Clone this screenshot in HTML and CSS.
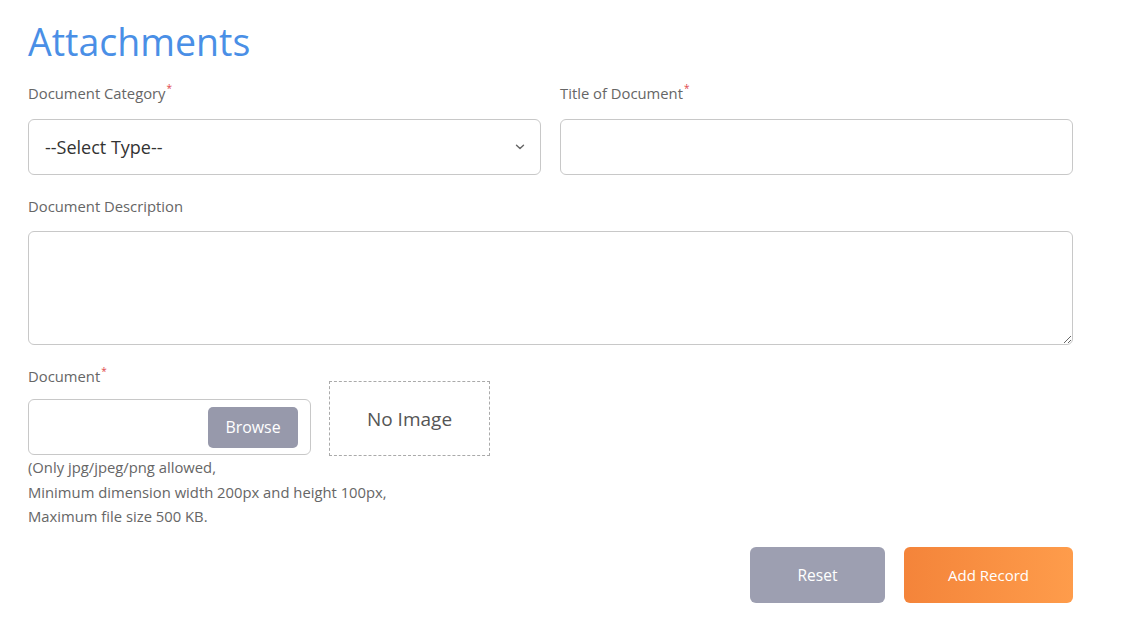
FILE: index.html
```html
<!DOCTYPE html>
<html>
<head>
<meta charset="utf-8">
<link rel="stylesheet" href="styles.css">
</head>
<body>
<div class="page">
  <h1 class="title">Attachments</h1>
  <div class="row two">
    <div class="field">
      <label class="label">Document Category<span class="req">*</span></label>
      <div class="select">
        <span class="select-text">--Select Type--</span>
        <svg class="chev" width="10" height="6" viewBox="0 0 10 6"><path d="M1.5 1.2 L5 4.6 L8.5 1.2" fill="none" stroke="#666" stroke-width="1.4" stroke-linecap="round" stroke-linejoin="round"/></svg>
      </div>
    </div>
    <div class="field">
      <label class="label">Title of Document<span class="req">*</span></label>
      <div class="input"></div>
    </div>
  </div>
  <div class="field desc">
    <label class="label">Document Description</label>
    <textarea class="textarea"></textarea>
  </div>
  <div class="doc-grid">
    <label class="label doc-label">Document<span class="req">*</span></label>
    <div class="file">
      <span class="browse">Browse</span>
    </div>
    <div class="noimage">No Image</div>
    <div class="help">
      <div>(Only jpg/jpeg/png allowed,</div>
      <div>Minimum dimension width 200px and height 100px,</div>
      <div>Maximum file size 500 KB.</div>
    </div>
  </div>
  <div class="actions">
    <button class="btn reset">Reset</button>
    <button class="btn add">Add Record</button>
  </div>
</div>
</body>
</html>
```
FILE: styles.css
```css
* { box-sizing: border-box; }
html, body { margin: 0; padding: 0; background: #fff; }
body { font-family: "Open Sans", "Noto Sans", sans-serif; color: #333; }
.page { width: 1101px; padding: 20px 28px 0 28px; }
.title { margin: 0; font-size: 37.5px; line-height: 43px; font-weight: 400; color: #4a8fe6; }
.row.two { display: grid; grid-template-columns: 1fr 1fr; column-gap: 19px; margin-top: 20px; }
.field { display: flex; flex-direction: column; }
.label { display: block; font-size: 14.8px; line-height: 20px; color: #666; margin-bottom: 16px; }
.req { color: #e0474c; font-size: 10px; vertical-align: top; position: relative; top: -5px; margin-left: 1px; }
.select { height: 56px; border: 1px solid #c8c8c8; border-radius: 6px; display: flex; align-items: center; justify-content: space-between; padding: 0 15px 0 16px; }
.select-text { font-size: 18px; color: #333; }
.input { height: 56px; border: 1px solid #c8c8c8; border-radius: 6px; }
.desc { margin-top: 21px; }
.desc .label { margin-bottom: 15px; }
.textarea { display: block; width: 100%; height: 114px; border: 1px solid #c8c8c8; border-radius: 6px; font-family: inherit; margin: 0; resize: both; outline: none; }
.doc-grid { display: grid; grid-template-columns: 283px 161px; column-gap: 18px; grid-template-rows: auto auto auto; margin-top: 21px; width: 600px; }
.doc-label { grid-column: 1; grid-row: 1; margin-bottom: 13px; }
.file { grid-column: 1; grid-row: 2; height: 56px; border: 1px solid #c8c8c8; border-radius: 6px; display: flex; align-items: center; justify-content: flex-end; padding-right: 12px; }
.browse { width: 90px; height: 41px; border-radius: 5px; background: #9799ab; color: #fff; font-size: 15.9px; display: flex; align-items: center; justify-content: center; }
.noimage { grid-column: 2; grid-row: 1 / 3; align-self: end; width: 161px; height: 75px; border: 1px dashed #aaa; display: flex; align-items: center; justify-content: center; font-size: 19px; color: #555; margin-bottom: -1px; }
.help { grid-column: 1 / 3; grid-row: 3; font-size: 14.8px; line-height: 24.5px; color: #666; white-space: nowrap; }
.actions { display: flex; justify-content: flex-end; gap: 19px; margin-top: 18px; width: 1045px; }
.btn { height: 56px; border: none; border-radius: 6px; color: #fff; font-family: inherit; font-size: 15px; padding: 0; }
.reset { width: 135px; background: #9d9fb1; font-size: 15.5px; }
.add { width: 169px; background: linear-gradient(90deg, #f4843a, #fe9c4b); }
```
